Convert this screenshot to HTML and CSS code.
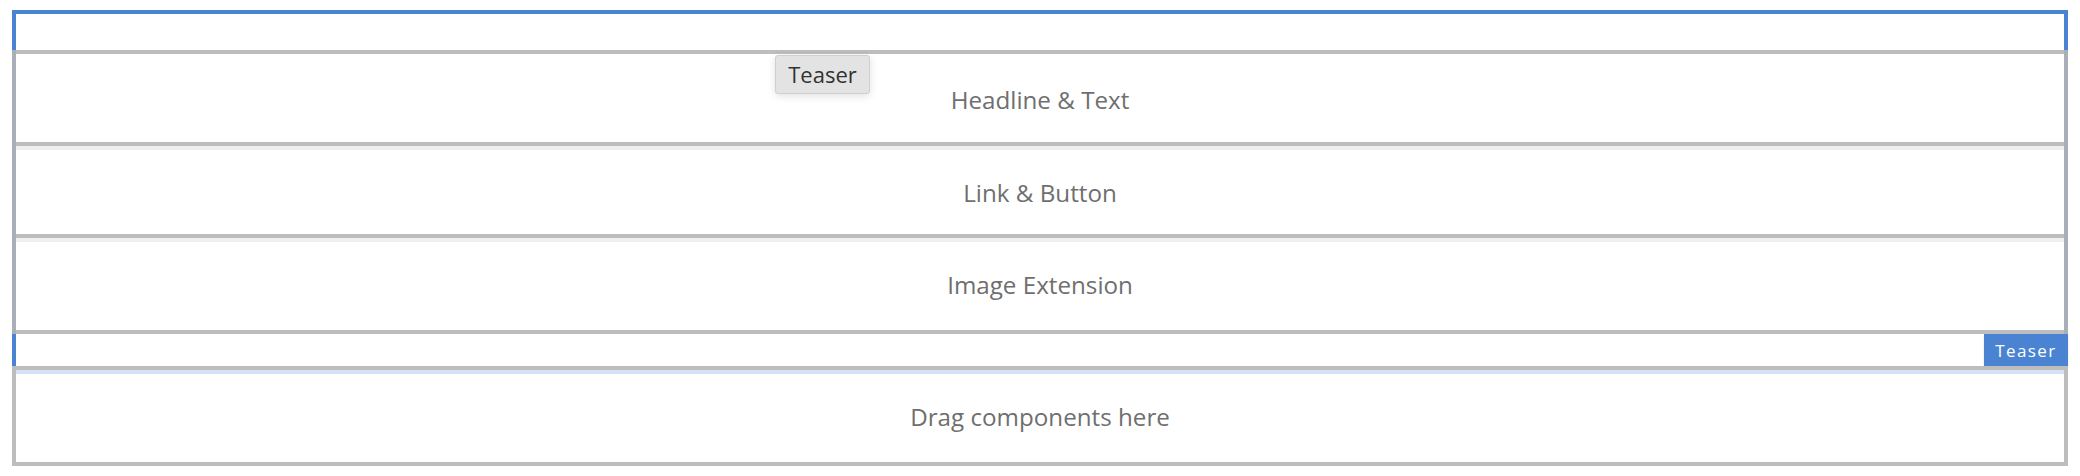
FILE: index.html
```html
<!DOCTYPE html>
<html lang="en">
<head>
<meta charset="utf-8">
<title>Teaser editor</title>
<link rel="stylesheet" href="styles.css">
</head>
<body>
<div class="editor">
  <div class="teaser-head"></div>
  <div class="items">
    <div class="item item-first"><span class="label">Headline &amp; Text</span></div>
    <div class="item item-short"><span class="label">Link &amp; Button</span></div>
    <div class="item item-last"><span class="label">Image Extension</span></div>
  </div>
  <div class="teaser-foot"><span class="badge">Teaser</span></div>
  <div class="dropzone"><span class="label">Drag components here</span></div>
  <div class="tooltip">Teaser</div>
</div>
</body>
</html>
```
FILE: styles.css
```css
html, body {
  margin: 0;
  padding: 0;
  background: #ffffff;
}
body {
  padding: 10px 12px;
  font-family: "Open Sans", "Noto Sans", sans-serif;
}
.editor {
  position: relative;
  display: flex;
  flex-direction: column;
}
.teaser-head {
  height: 36px;
  border: 4px solid #4a83d2;
  border-bottom: none;
}
.items {
  display: flex;
  flex-direction: column;
  border-left: 4px solid #a9afb9;
  border-right: 4px solid #a9afb9;
}
.item {
  height: 88px;
  border-top: 4px solid #efefef;
  border-bottom: 4px solid #bdbdbd;
  display: flex;
  align-items: center;
  justify-content: center;
}
.item-first {
  border-top-color: #bdbdbd;
}
.item-first .label {
  margin-top: 2px;
}
.item-short {
  height: 84px;
}
.item-last .label {
  margin-top: -3px;
}
.label {
  font-size: 24.2px;
  color: #6f6f6f;
}
.dropzone .label {
  margin-top: -3px;
}
.teaser-foot {
  height: 32px;
  border-left: 4px solid #4a83d2;
  display: flex;
  justify-content: flex-end;
}
.badge {
  width: 84px;
  height: 32px;
  background: #4a83d2;
  color: #ffffff;
  font-size: 17px;
  letter-spacing: 1.4px;
  display: flex;
  align-items: center;
  justify-content: center;
  box-shadow: 0 2px 2px rgba(0, 0, 0, 0.12);
}
.dropzone {
  position: relative;
  height: 88px;
  margin-top: 4px;
  padding-top: 4px;
  border: 4px solid #bdbdbd;
  border-top: none;
  box-shadow: inset 0 4px 0 #d6e1f4;
  display: flex;
  align-items: center;
  justify-content: center;
}
.dropzone::before {
  content: "";
  position: absolute;
  left: -4px;
  right: -4px;
  top: -4px;
  height: 4px;
  background: #bdbdbd;
}
.tooltip {
  position: absolute;
  left: 763px;
  top: 45px;
  width: 95px;
  height: 39px;
  padding-bottom: 2px;
  box-sizing: border-box;
  border: 1px solid #cfcfcf;
  border-radius: 3px;
  background: #e3e3e3;
  color: #323232;
  font-size: 22px;
  display: flex;
  align-items: center;
  justify-content: center;
  box-shadow: 0 2px 8px rgba(0, 0, 0, 0.12);
}
```
